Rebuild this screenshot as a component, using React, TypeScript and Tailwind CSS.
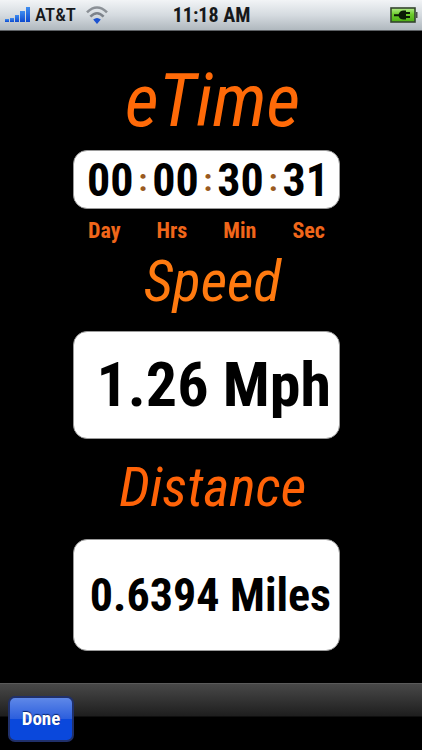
import { Fragment } from 'react';

const timeParts = [
  { label: 'Day', value: '00' },
  { label: 'Hrs', value: '00' },
  { label: 'Min', value: '30' },
  { label: 'Sec', value: '31' },
];

function SignalIcon() {
  return (
    <svg width="26" height="16" viewBox="0 0 26 16" aria-hidden="true">
      <defs>
        <linearGradient id="bars" x1="0" y1="0" x2="0" y2="1">
          <stop offset="0" stopColor="#3f8df0" />
          <stop offset="1" stopColor="#0c49cf" />
        </linearGradient>
      </defs>
      <g fill="url(#bars)">
        <rect x="0" y="12" width="4" height="3" />
        <rect x="5" y="11" width="4" height="4" />
        <rect x="10" y="8" width="4" height="7" />
        <rect x="15" y="4" width="5" height="11" />
        <rect x="21" y="0" width="4" height="15" />
      </g>
    </svg>
  );
}

function WifiIcon() {
  return (
    <svg width="22" height="18" viewBox="0 0 22 18" fill="none" aria-hidden="true">
      <path d="M1 6.4 Q11 -3.4 21 6.4" stroke="#8b9096" strokeWidth="2.6" />
      <path d="M4.4 10.6 Q11 3.8 17.6 10.6" stroke="#7d838b" strokeWidth="2.6" />
      <path d="M7.2 13.6 Q11 10.2 14.8 13.6 L11 18 Z" fill="#1c52d0" />
    </svg>
  );
}

function BatteryIcon() {
  return (
    <svg width="28" height="16" viewBox="0 0 28 16" aria-hidden="true">
      <defs>
        <linearGradient id="charge" x1="0" y1="0" x2="0" y2="1">
          <stop offset="0" stopColor="#b4ec8c" />
          <stop offset="0.45" stopColor="#6ccb2c" />
          <stop offset="1" stopColor="#4cae14" />
        </linearGradient>
      </defs>
      <rect x="1" y="1" width="24" height="14" fill="url(#charge)" stroke="#35452f" strokeWidth="1.6" />
      <path d="M26 5 h1.5 v6 h-1.5 z" fill="#4a4f4a" />
      <path
        d="M4 7.2 H8.6 C9.4 4.8 11 3.6 13.4 3.4 H16 V5 H20 V7 H16 V9 H20 V11 H16 V12.6 H13.4 C11 12.4 9.4 11.4 8.6 9.2 H4 Z"
        fill="#0b1a06"
      />
    </svg>
  );
}

function StatusBar() {
  return (
    <header className="grid h-[31px] grid-cols-[1fr_auto_1fr] items-center border-b border-[#5d6064] bg-gradient-to-b from-[#f2f4f6] via-[#d5dbe0] to-[#b0b8be] pr-1 pl-[5px] text-[#16181a]">
      <div className="flex items-center gap-1">
        <SignalIcon />
        <span className="text-[19px] leading-6 font-medium">AT&amp;T</span>
        <span className="pl-1.5">
          <WifiIcon />
        </span>
      </div>
      <time className="text-[20px] leading-6 font-bold">11:18 AM</time>
      <div className="flex justify-end">
        <BatteryIcon />
      </div>
    </header>
  );
}

export default function App() {
  return (
    <div className="flex min-h-screen flex-col bg-black font-['Roboto_Condensed','Liberation_Sans',sans-serif]">
      <StatusBar />

      <main className="flex-1 pt-8 pr-[82px] pb-8 pl-[73px] text-black">
        <section>
          <h1 className="pl-3 text-center text-[74px] leading-[76px] text-[#ff6a08] italic">eTime</h1>
          <div className="mt-[11px] flex h-[59px] items-center justify-between rounded-[14px] border border-[#9a9a9a] bg-white pr-2.5 pl-[13px] text-[46px] leading-none font-bold">
            {timeParts.map((part, i) => (
              <Fragment key={part.label}>
                {i > 0 && <span className="text-[32px] leading-none text-[#9a5a20]">:</span>}
                <span>{part.value}</span>
              </Fragment>
            ))}
          </div>
          <div className="mt-2.5 flex justify-between px-[15px] text-[22px] leading-6 font-bold text-[#f0661a]">
            {timeParts.map((part) => (
              <span key={part.label}>{part.label}</span>
            ))}
          </div>
        </section>

        <section className="mt-2">
          <h2 className="pl-3 text-center text-[58px] leading-[60px] text-[#ff7a10] italic">Speed</h2>
          <div className="mt-5 flex h-[108px] items-center justify-end rounded-[14px] border border-[#9a9a9a] bg-white pr-2 text-[62px] leading-none font-bold whitespace-nowrap">
            1.26 Mph
          </div>
        </section>

        <section className="mt-[18px]">
          <h2 className="pl-3 text-center text-[56px] leading-[60px] text-[#ff6308] italic">Distance</h2>
          <div className="mt-[22px] flex h-[112px] items-center justify-end rounded-[14px] border border-[#9a9a9a] bg-white pr-2 text-[46px] leading-none font-bold whitespace-nowrap">
            0.6394 Miles
          </div>
        </section>
      </main>

      <footer className="flex h-[68px] items-start border-t border-[#5a5a5a] bg-[linear-gradient(#484848,#1e1e1e_32px,#000_33px)] px-2 pt-3">
        <button
          type="button"
          className="h-[46px] w-[66px] rounded-[7px] border-2 border-[#20306a] bg-[linear-gradient(#5f88e8,#2c5fdd_49%,#0a48dc_50%,#0a48dc)] text-[19px] leading-6 font-bold text-white [text-shadow:0_-1px_1px_#0a2468]"
        >
          Done
        </button>
      </footer>
    </div>
  );
}
